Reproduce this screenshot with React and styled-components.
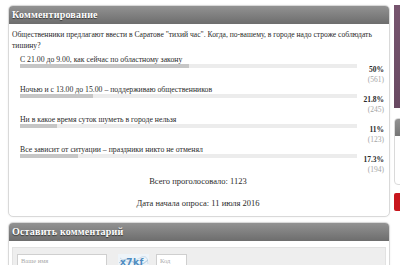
import React from 'react'
import styled, { createGlobalStyle } from 'styled-components'

const GlobalStyle = createGlobalStyle`
  html, body {
    margin: 0;
    padding: 0;
    background: #fff;
    overflow: hidden;
  }
  body {
    font-family: "Liberation Serif", "DejaVu Serif", serif;
    color: #2a2a2a;
  }
`

const Page = styled.div`
  display: flex;
  align-items: flex-start;
  gap: 4px;
  padding: 5px 0 0 8px;
  width: 600px;
`

const Main = styled.div`
  width: 382px;
  flex: none;
  display: flex;
  flex-direction: column;
  gap: 5px;
`

const Panel = styled.div`
  background: #fff;
  border: 1px solid #d9d9d9;
  border-radius: 5px;
  box-shadow: 0 0 2px rgba(0, 0, 0, 0.08);
  overflow: hidden;
`

const PanelHeader = styled.div`
  height: 18px;
  line-height: 18px;
  padding-left: 3px;
  background: linear-gradient(#929292, #6d6d6d);
  color: #fff;
  font-size: 10px;
  font-weight: bold;
  letter-spacing: 0.2px;
  text-shadow: 0 1px 1px rgba(0, 0, 0, 0.55);
`

const PollBody = styled.div`
  padding: 5px 5px 7px 3px;
`

const Question = styled.div`
  font-size: 7.6px;
  line-height: 11px;
  margin-bottom: 4px;
`

const Options = styled.div`
  padding-left: 8px;
`

const Option = styled.div`
  display: flex;
  flex-direction: column;
`

const Label = styled.div`
  font-size: 7.75px;
  line-height: 9px;
  white-space: nowrap;
`

const BarLine = styled.div`
  display: flex;
  align-items: flex-start;
`

const Track = styled.div`
  flex: 1;
  height: 4px;
  background: #ececec;
`

const Fill = styled.div`
  height: 100%;
  background: #c6c6c6;
`

const Percent = styled.div`
  width: 27px;
  margin-top: 1px;
  text-align: right;
  font-size: 7.5px;
  line-height: 10px;
  font-weight: bold;
`

const Count = styled.div`
  align-self: flex-end;
  width: 27px;
  text-align: right;
  font-size: 7.5px;
  line-height: 10px;
  color: #a5a5a5;
`

const Summary = styled.div`
  text-align: center;
  font-size: 8.5px;
  line-height: 11px;
  margin-top: ${p => p.$gap}px;
`

const FormBody = styled.div`
  padding: 6px 3px 10px 3px;
`

const FormBox = styled.div`
  display: flex;
  align-items: center;
  background: #eee;
  border: 1px solid #e2e2e2;
  padding: 6px 4px 10px;
`

const Field = styled.div`
  width: ${p => p.$w}px;
  height: 14px;
  box-sizing: border-box;
  background: #fff;
  border: 1px solid #cfcfcf;
  color: #aaa;
  font-size: 6.5px;
  line-height: 12px;
  padding-left: 3px;
  margin-right: ${p => p.$mr || 0}px;
`

const Captcha = styled.svg`
  width: 31px;
  height: 14px;
  margin-right: 7px;
  flex: none;
`

const Sidebar = styled.div`
  width: 200px;
  display: flex;
  flex-direction: column;
`

const Banner = styled.div`
  height: 103px;
  background: linear-gradient(160deg, #77556f, #5f4159);
  margin-bottom: 10px;
`

const Widget = styled.div`
  height: 65px;
  border: 1px solid #dadada;
  border-radius: 4px 0 0 4px;
  overflow: hidden;
  margin-bottom: 8px;
`

const WidgetHead = styled.div`
  height: 17px;
  background: linear-gradient(#929292, #757575);
`

const RedBlock = styled.div`
  height: 18px;
  background: #c8161d;
  border-radius: 2px 0 0 2px;
`

const options = [
  { label: 'С 21.00 до 9.00, как сейчас по областному закону', pct: 50, text: '50%', count: 561 },
  { label: 'Ночью и с 13.00 до 15.00 – поддерживаю общественников', pct: 21.8, text: '21.8%', count: 245 },
  { label: 'Ни в какое время суток шуметь в городе нельзя', pct: 11, text: '11%', count: 123 },
  { label: 'Все зависит от ситуации – праздники никто не отменял', pct: 17.3, text: '17.3%', count: 194 },
]

export default function App () {
  return (
    <>
      <GlobalStyle />
      <Page>
        <Main>
          <Panel>
            <PanelHeader>Комментирование</PanelHeader>
            <PollBody>
              <Question>
                Общественники предлагают ввести в Саратове "тихий час". Когда, по-вашему, в городе надо строже соблюдать тишину?
              </Question>
              <Options>
                {options.map(o => (
                  <Option key={o.label}>
                    <Label>{o.label}</Label>
                    <BarLine>
                      <Track>
                        <Fill style={{ width: `${o.pct}%` }} />
                      </Track>
                      <Percent>{o.text}</Percent>
                    </BarLine>
                    <Count>({o.count})</Count>
                  </Option>
                ))}
              </Options>
              <Summary $gap={1}>Всего проголосовало: 1123</Summary>
              <Summary $gap={11}>Дата начала опроса: 11 июля 2016</Summary>
            </PollBody>
          </Panel>
          <Panel>
            <PanelHeader>Оставить комментарий</PanelHeader>
            <FormBody>
              <FormBox>
                <Field $w={90} $mr={11}>Ваше имя</Field>
                <Captcha viewBox="0 0 31 14">
                  <rect width="31" height="14" fill="#eef4f9" />
                  <path d="M1 9 Q8 2 15 8 T30 6" stroke="#9bbcd8" strokeWidth="0.8" fill="none" />
                  <path d="M2 4 Q10 12 20 5 T30 10" stroke="#b5cde2" strokeWidth="0.6" fill="none" />
                  <text x="2" y="11" fontSize="9" fontWeight="bold" fill="#4f8cc0" fontFamily="DejaVu Sans" letterSpacing="0.5">x7kf</text>
                </Captcha>
                <Field $w={31}>Код</Field>
              </FormBox>
            </FormBody>
          </Panel>
        </Main>
        <Sidebar>
          <Banner />
          <Widget>
            <WidgetHead />
          </Widget>
          <RedBlock />
        </Sidebar>
      </Page>
    </>
  )
}
